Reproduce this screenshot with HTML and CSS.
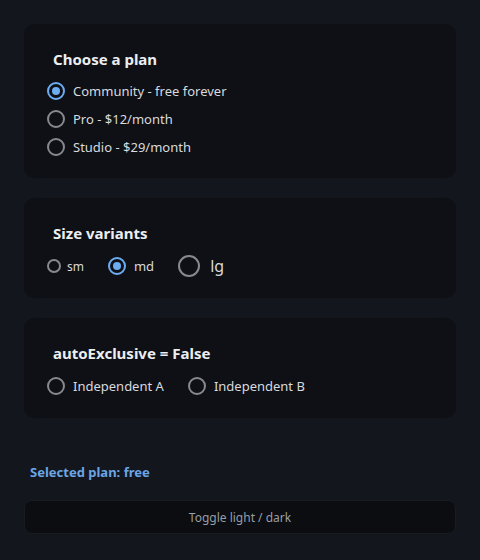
FILE: index.html
```html
<!DOCTYPE html>
<html>
<head>
<meta charset="utf-8">
<link rel="stylesheet" href="styles.css">
</head>
<body>
<div class="page">
  <section class="card">
    <div class="title">Choose a plan</div>
    <div class="col">
      <label class="radio"><span class="dot md checked"></span><span class="lbl">Community - free forever</span></label>
      <label class="radio"><span class="dot md"></span><span class="lbl">Pro - $12/month</span></label>
      <label class="radio"><span class="dot md"></span><span class="lbl">Studio - $29/month</span></label>
    </div>
  </section>
  <section class="card">
    <div class="title">Size variants</div>
    <div class="row">
      <label class="radio s-sm"><span class="dot sm"></span><span class="lbl">sm</span></label>
      <label class="radio s-md"><span class="dot md checked"></span><span class="lbl">md</span></label>
      <label class="radio s-lg"><span class="dot lg"></span><span class="lbl">lg</span></label>
    </div>
  </section>
  <section class="card">
    <div class="title">autoExclusive = False</div>
    <div class="row">
      <label class="radio"><span class="dot md"></span><span class="lbl">Independent A</span></label>
      <label class="radio"><span class="dot md"></span><span class="lbl">Independent B</span></label>
    </div>
  </section>
  <div class="selected">Selected plan: free</div>
  <button class="toggle">Toggle light / dark</button>
</div>
</body>
</html>
```
FILE: styles.css
```css
* { box-sizing: border-box; }
html, body { margin: 0; padding: 0; }
body {
  background: #13161d;
  font-family: "Noto Sans", "Open Sans", sans-serif;
  color: #d8dade;
  width: 480px;
  height: 560px;
  overflow: hidden;
}
.page {
  padding: 24px 24px 0 24px;
  display: flex;
  flex-direction: column;
}
.card {
  background: #0e1016;
  border-radius: 10px;
  padding: 23px 24px 17px 23px;
  margin-bottom: 20px;
}
.title {
  font-size: 15px;
  font-weight: 700;
  line-height: 24px;
  color: #eceef1;
  margin-left: 6px;
  margin-bottom: 6px;
}
.col { display: flex; flex-direction: column; }
.row { display: flex; align-items: center; gap: 24px; height: 30px; }
.radio {
  display: flex;
  align-items: center;
  height: 28px;
  gap: 8px;
  font-size: 13px;
  color: #d8dade;
}
.dot {
  display: inline-flex;
  align-items: center;
  justify-content: center;
  border: 2px solid #86898f;
  border-radius: 50%;
  flex: none;
}
.dot.sm { width: 14px; height: 14px; }
.dot.md { width: 18px; height: 18px; }
.dot.lg { width: 22px; height: 22px; }
.dot.checked { border-color: #6cacf0; }
.dot.checked::after {
  content: "";
  width: 8px;
  height: 8px;
  border-radius: 50%;
  background: #6cacf0;
}
.s-sm { gap: 6px; font-size: 12px; }
.s-md { gap: 8px; font-size: 13px; }
.s-lg { gap: 10px; font-size: 16px; }
.selected {
  margin-top: 25px;
  margin-left: 6px;
  font-size: 13px;
  font-weight: 700;
  line-height: 18px;
  color: #6aa5e6;
}
.toggle {
  margin-top: 19px;
  height: 34px;
  width: 100%;
  background: #0b0d11;
  border: 1px solid #181b22;
  border-radius: 8px;
  color: #9a9ea6;
  font-family: "Noto Sans", "Open Sans", sans-serif;
  font-size: 12px;
}
```
